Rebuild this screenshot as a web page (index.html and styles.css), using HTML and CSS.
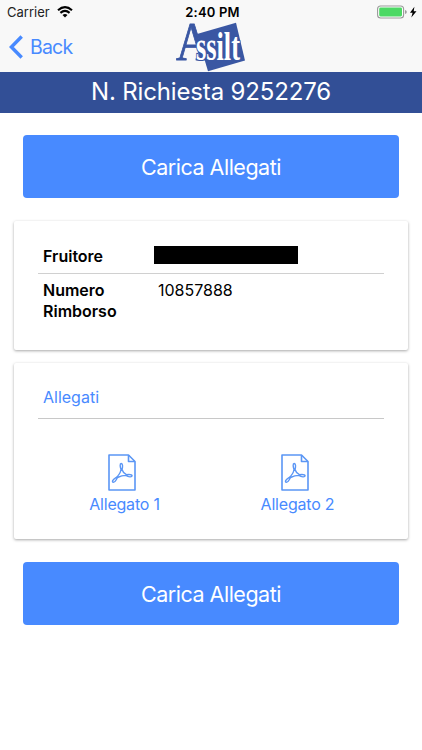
FILE: index.html
```
<!DOCTYPE html>
<html lang="it">
<head>
	<meta charset="utf-8">
	<meta name="viewport" content="width=device-width, initial-scale=1">
	<title>Richiesta 9252276</title>
	<link rel="stylesheet" href="styles.css">
</head>
<body>
	<header class="header">
		<div class="status">
			<div class="carrier">
				<span>Carrier</span>
				<svg width="16" height="12" viewBox="0 0 16 12" fill="none" stroke="#000" stroke-width="2.1">
					<path d="M1 4.3Q8-1.9 15 4.3M3.4 6.9Q8 3 12.6 6.9"/>
					<path d="M5.5 8.9Q8 6.9 10.5 8.9L8 11.5Z" fill="#000" stroke="none"/>
				</svg>
			</div>
			<div class="time">2:40 PM</div>
			<div class="battery">
				<svg width="41" height="14" viewBox="0 0 41 14">
					<rect x=".6" y="1" width="26" height="12" rx="3" fill="#fff" stroke="#999" stroke-width="1.1"/>
					<rect x="2.2" y="2.6" width="22.8" height="8.8" rx="1.3" fill="#4cd964"/>
					<path d="M28.2 5v4q1.5-.6 1.5-2t-1.5-2" fill="#888"/>
					<path d="M37.4 1.7L33 7.8h2.6L34.3 12.5 39.5 6.2h-2.8z" fill="#000"/>
				</svg>
			</div>
		</div>
		<div class="navbar">
			<a href="#" class="back">
				<svg width="14" height="24" viewBox="0 0 14 24" fill="none" stroke="#488aff" stroke-width="3.4">
					<path d="M12.7 1.5L2.4 12 12.7 22.5"/>
				</svg>
				<span>Back</span>
			</a>
			<svg class="logo" width="72" height="50" viewBox="0 0 72 50">
				<path d="M22 12L61 .7 70 38.5 33 49.3Z" fill="#3a57a3"/>
				<g class="logo-text">
					<text class="logo-a" x="1" y="38" textLength="33" lengthAdjust="spacingAndGlyphs">A</text>
					<text class="logo-rest" x="21" y="38" textLength="44" lengthAdjust="spacingAndGlyphs">ssilt</text>
				</g>
			</svg>
		</div>
	</header>
	<h1 class="title">N. Richiesta 9252276</h1>
	<main class="content">
		<button class="btn">Carica Allegati</button>
		<section class="card details">
			<div class="row first">
				<b>Fruitore</b>
				<span class="hidden-name"></span>
			</div>
			<div class="row">
				<b>Numero Rimborso</b>
				<span class="value">10857888</span>
			</div>
		</section>
		<section class="card files">
			<h2>Allegati</h2>
			<div class="list">
				<a href="#" class="file">
					<svg width="28" height="37" viewBox="0 0 28 37" fill="none" stroke="#5b96f5" stroke-width="1.6" stroke-linejoin="round">
						<path d="M1 1H20.5L27 7.5V36H1Z"/>
						<path d="M20.5 1V7.5H27"/>
						<path stroke-width="1.4" d="M13.2 9.5C11.5 9.7 12.2 13 13 15.5C12.5 19 10.5 21.5 8 23.7C5 25.3 3.5 27.8 5.2 28.3C7 28.5 8.5 25.5 9.5 23.5C12 22.3 15 21.4 17.8 21.4C20.5 23.2 24 23.3 24.1 21.8C23.8 20.2 20.5 20.4 18.4 20.7C16.2 19.6 14.7 17.8 14 15.5C14.8 12.5 14.9 9.7 13.2 9.5Z"/>
					</svg>
					<span>Allegato 1</span>
				</a>
				<a href="#" class="file">
					<svg width="28" height="37" viewBox="0 0 28 37" fill="none" stroke="#5b96f5" stroke-width="1.6" stroke-linejoin="round">
						<path d="M1 1H20.5L27 7.5V36H1Z"/>
						<path d="M20.5 1V7.5H27"/>
						<path stroke-width="1.4" d="M13.2 9.5C11.5 9.7 12.2 13 13 15.5C12.5 19 10.5 21.5 8 23.7C5 25.3 3.5 27.8 5.2 28.3C7 28.5 8.5 25.5 9.5 23.5C12 22.3 15 21.4 17.8 21.4C20.5 23.2 24 23.3 24.1 21.8C23.8 20.2 20.5 20.4 18.4 20.7C16.2 19.6 14.7 17.8 14 15.5C14.8 12.5 14.9 9.7 13.2 9.5Z"/>
					</svg>
					<span>Allegato 2</span>
				</a>
			</div>
		</section>
		<button class="btn">Carica Allegati</button>
	</main>
</body>
</html>
```
FILE: styles.css
```
*{
	margin: 0;
	padding: 0;
	box-sizing: border-box;
}
body{
	background: #fff;
	color: #000;
	font-family: Inter, "Liberation Sans", sans-serif;
	font-size: 16px;
}
a{
	color: #488aff;
	text-decoration: none;
}
svg{
	display: block;
	flex: none;
}
.header{
	height: 72px;
	background: #f8f8f8;
}
.status{
	display: grid;
	grid-template-columns: 1fr auto 1fr;
	align-items: center;
	height: 22px;
	padding: 2px 4px 0 7px;
	font-size: 13px;
}
.carrier{
	display: flex;
	align-items: center;
	gap: 7px;
	color: #222;
}
.time{
	font-weight: 600;
	letter-spacing: .2px;
}
.battery{
	justify-self: end;
}
.navbar{
	display: grid;
	grid-template-columns: 1fr 72px 1fr;
	height: 50px;
	padding: 0 1px;
}
.logo{
	overflow: visible;
}
.back{
	display: flex;
	align-items: center;
	gap: 7px;
	padding-left: 8px;
	font-size: 19px;
	letter-spacing: -.6px;
}
.back span{
	letter-spacing: -.8px;
	font-size: 19.5px;
}
.logo-text{
	font-family: "Liberation Serif", serif;
	stroke-linejoin: round;
}
.logo-a{
	font-size: 55px;
	fill: #3a57a3;
	stroke: #3a57a3;
	stroke-width: .9px;
}
.logo-rest{
	font-size: 41px;
	fill: #fff;
	stroke: #3a57a3;
	stroke-width: 2.2px;
	paint-order: stroke;
	font-weight: bold;
}
.title{
	height: 41px;
	line-height: 40px;
	background: #324f96;
	color: #fff;
	font-size: 24px;
	font-weight: 400;
	letter-spacing: -.15px;
	text-align: center;
}
.content{
	padding: 22px 14px;
}
.btn{
	display: block;
	width: 376px;
	height: 63px;
	margin: 0 auto;
	border: 0;
	border-radius: 4px;
	background: #488aff;
	color: #fff;
	font-family: inherit;
	font-size: 21.5px;
	letter-spacing: -.5px;
}
.card{
	padding: 0 24px;
	border-radius: 2px;
	background: #fff;
	box-shadow: 0 1px 3px rgba(0,0,0,.35);
}
.details{
	height: 129px;
	margin-top: 23px;
	padding-top: 20px;
}
.row{
	display: flex;
	padding: 6px 5px;
	line-height: 21px;
}
.row b{
	width: 115px;
	padding-right: 20px;
	font-weight: 600;
}
.first{
	height: 33px;
	padding-top: 5px;
	padding-bottom: 0;
	border-bottom: 1px solid #d0d0d0;
}
.hidden-name{
	width: 144px;
	height: 18px;
	margin-left: -4px;
	background: #000;
}
.files{
	height: 176px;
	margin: 13px 0 23px;
	padding-top: 14px;
}
.files h2{
	height: 42px;
	padding-left: 5px;
	border-bottom: 1px solid #c8c8c8;
	color: #488aff;
	font-size: 16px;
	font-weight: 400;
	line-height: 40px;
}
.list{
	display: grid;
	grid-template-columns: 1fr 1fr;
	padding-top: 35px;
}
.file{
	display: flex;
	flex-direction: column;
	align-items: center;
	font-size: 16px;
	line-height: 26px;
	letter-spacing: -.2px;
}
.file svg{
	margin-right: 5px;
}
```
